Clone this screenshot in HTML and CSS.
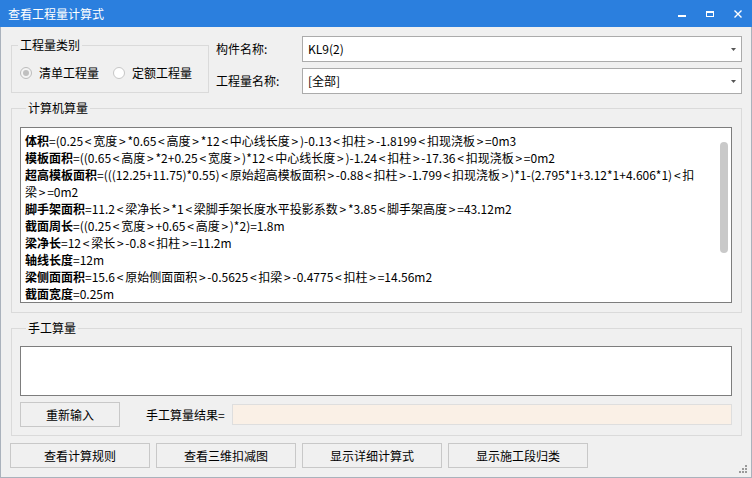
FILE: index.html
```html
<!DOCTYPE html>
<html lang="zh-CN">
<head>
<meta charset="utf-8">
<title>查看工程量计算式</title>
<link rel="stylesheet" href="styles.css">
</head>
<body>
<div class="window">
  <div class="titlebar">
    <span class="title">查看工程量计算式</span>
    <div class="controls">
      <div class="ctrl"><svg width="28" height="27" viewBox="0 0 28 27"><rect x="10" y="15" width="8" height="2" fill="#fff"/></svg></div>
      <div class="ctrl"><svg width="28" height="27" viewBox="0 0 28 27"><rect x="10.5" y="11.5" width="7" height="5" fill="none" stroke="#fff" stroke-width="1"/><rect x="10" y="11" width="8" height="2" fill="#fff"/></svg></div>
      <div class="ctrl"><svg width="28" height="27" viewBox="0 0 28 27"><path d="M10.5 10.5 L17.5 17.5 M17.5 10.5 L10.5 17.5" stroke="#fff" stroke-width="1.4" fill="none"/></svg></div>
    </div>
  </div>
  <div class="body">
    <div class="top-row">
      <fieldset class="group type-group">
        <legend>工程量类别</legend>
        <div class="radios">
          <div class="radio"><span class="circle checked"><span class="dot"></span></span><span>清单工程量</span></div>
          <div class="radio"><span class="circle"></span><span>定额工程量</span></div>
        </div>
      </fieldset>
      <div class="fields">
        <div class="field-row">
          <span class="field-label">构件名称:</span>
          <div class="combo"><span class="combo-text">KL9(2)</span><svg class="arrow" width="5" height="3" viewBox="0 0 5 3"><polygon points="0,0 5,0 2.5,3" fill="#555"/></svg></div>
        </div>
        <div class="field-row">
          <span class="field-label">工程量名称:</span>
          <div class="combo"><span class="combo-text">[全部]</span><svg class="arrow" width="5" height="3" viewBox="0 0 5 3"><polygon points="0,0 5,0 2.5,3" fill="#555"/></svg></div>
        </div>
      </div>
    </div>

    <fieldset class="group calc-group">
      <legend>计算机算量</legend>
      <div class="calc-text">
        <div class="formula">
          <div><b>体积</b>=(0.25<i>&lt;</i>宽度<i>&gt;</i>*0.65<i>&lt;</i>高度<i>&gt;</i>*12<i>&lt;</i>中心线长度<i>&gt;</i>)-0.13<i>&lt;</i>扣柱<i>&gt;</i>-1.8199<i>&lt;</i>扣现浇板<i>&gt;</i>=0m3</div>
          <div><b>模板面积</b>=((0.65<i>&lt;</i>高度<i>&gt;</i>*2+0.25<i>&lt;</i>宽度<i>&gt;</i>)*12<i>&lt;</i>中心线长度<i>&gt;</i>)-1.24<i>&lt;</i>扣柱<i>&gt;</i>-17.36<i>&lt;</i>扣现浇板<i>&gt;</i>=0m2</div>
          <div><b>超高模板面积</b>=(((12.25+11.75)*0.55)<i>&lt;</i>原始超高模板面积<i>&gt;</i>-0.88<i>&lt;</i>扣柱<i>&gt;</i>-1.799<i>&lt;</i>扣现浇板<i>&gt;</i>)*1-(2.795*1+3.12*1+4.606*1)<i>&lt;</i>扣<br>梁<i>&gt;</i>=0m2</div>
          <div><b>脚手架面积</b>=11.2<i>&lt;</i>梁净长<i>&gt;</i>*1<i>&lt;</i>梁脚手架长度水平投影系数<i>&gt;</i>*3.85<i>&lt;</i>脚手架高度<i>&gt;</i>=43.12m2</div>
          <div><b>截面周长</b>=((0.25<i>&lt;</i>宽度<i>&gt;</i>+0.65<i>&lt;</i>高度<i>&gt;</i>)*2)=1.8m</div>
          <div><b>梁净长</b>=12<i>&lt;</i>梁长<i>&gt;</i>-0.8<i>&lt;</i>扣柱<i>&gt;</i>=11.2m</div>
          <div><b>轴线长度</b>=12m</div>
          <div><b>梁侧面面积</b>=15.6<i>&lt;</i>原始侧面面积<i>&gt;</i>-0.5625<i>&lt;</i>扣梁<i>&gt;</i>-0.4775<i>&lt;</i>扣柱<i>&gt;</i>=14.56m2</div>
          <div><b>截面宽度</b>=0.25m</div>
        </div>
        <div class="scroll"><div class="thumb"></div></div>
      </div>
    </fieldset>

    <fieldset class="group manual-group">
      <legend>手工算量</legend>
      <div class="manual-input"></div>
      <div class="manual-row">
        <div class="btn btn-small">重新输入</div>
        <span class="result-label">手工算量结果=</span>
        <div class="result"></div>
      </div>
    </fieldset>

    <div class="bottom-buttons">
      <div class="btn btn-wide">查看计算规则</div>
      <div class="btn btn-wide">查看三维扣减图</div>
      <div class="btn btn-wide">显示详细计算式</div>
      <div class="btn btn-wide">显示施工段归类</div>
    </div>

    <svg class="grip" width="9" height="9" viewBox="0 0 9 9">
      <rect x="6" y="0" width="2" height="2" fill="#9a9a9a"/>
      <rect x="3" y="3" width="2" height="2" fill="#9a9a9a"/>
      <rect x="6" y="3" width="2" height="2" fill="#9a9a9a"/>
      <rect x="0" y="6" width="2" height="2" fill="#9a9a9a"/>
      <rect x="3" y="6" width="2" height="2" fill="#9a9a9a"/>
      <rect x="6" y="6" width="2" height="2" fill="#9a9a9a"/>
    </svg>
  </div>
</div>
</body>
</html>
```

FILE: styles.css
```css
* { box-sizing: border-box; }
html, body { margin: 0; padding: 0; }
body {
  width: 752px;
  height: 478px;
  overflow: hidden;
  background: #f0f0f0;
  color: #000;
  font-family: "Noto Sans CJK SC", "Microsoft YaHei", sans-serif;
  font-size: 12px;
}
.window { width: 752px; height: 478px; display: flex; flex-direction: column; }

.titlebar {
  height: 27px;
  flex: none;
  background: #2b7fde;
  color: #fff;
  display: flex;
  align-items: center;
  padding-left: 8px;
}
.title { flex: 1; font-size: 12px; line-height: 14px; }
.controls { display: flex; height: 27px; }
.ctrl { width: 28px; height: 27px; }
.ctrl svg { display: block; }

.body {
  position: relative;
  flex: 1;
  border: 1px solid #aab2bc;
  border-top: none;
  padding: 9px 9px 0 10px;
  display: flex;
  flex-direction: column;
}

.group {
  margin: 0;
  padding: 0;
  min-width: 0;
  border: 1px solid #dadada;
}
.group legend {
  margin-left: 6px;
  padding: 0 2px;
  font-size: 12px;
  line-height: 14px;
}

.top-row { display: flex; justify-content: space-between; height: 58px; }
.type-group { width: 198px; height: 55px; margin-top: 2px; }
.radios { display: flex; align-items: center; padding: 13px 0 0 8px; height: 29px; }
.radio { display: flex; align-items: center; gap: 7px; margin-right: 14px; line-height: 16px; }
.circle {
  width: 12px; height: 12px;
  border: 1px solid #c6c6c6;
  border-radius: 50%;
  background: #fff;
  display: flex; align-items: center; justify-content: center;
}
.circle.checked { border-color: #bcbcbc; background: #f4f4f4; }
.dot { width: 6px; height: 6px; border-radius: 50%; background: #c0c0c0; }

.fields { width: 526px; display: flex; flex-direction: column; gap: 6px; }
.field-row { display: flex; align-items: center; height: 26px; }
.field-label { width: 86px; line-height: 16px; }
.combo {
  width: 440px; height: 26px;
  border: 1px solid #ababab;
  background: #fff;
  display: flex; align-items: center;
  padding: 0 5px 0 5px;
}
.combo-text { flex: 1; line-height: 16px; }
.arrow { display: block; }

.calc-group { margin-top: 7px; padding: 12px 9px 9px 8px; }
.calc-text {
  height: 176px;
  border: 1px solid #7d7d7d;
  background: #fff;
  display: flex;
}
.formula {
  flex: 1;
  padding: 4px 0 0 4px;
  line-height: 17px;
  white-space: nowrap;
  overflow: hidden;
}
.formula b { font-weight: bold; }
.formula i { font-style: normal; padding: 0 1.75px; }
.scroll { width: 15px; flex: none; padding-top: 14px; }
.thumb { width: 8px; height: 111px; margin-left: 4px; background: #c9c9c9; border-radius: 4px; }

.manual-group { margin-top: 8px; padding: 11px 9px 8px 8px; }
.manual-input { height: 50px; border: 1px solid #7d7d7d; background: #fff; }
.manual-row { display: flex; align-items: center; margin-top: 6px; height: 25px; }

.btn {
  height: 25px;
  border: 1px solid #c8c8c8;
  background: #f0f0f0;
  display: flex; align-items: center; justify-content: center;
  line-height: 16px;
}
.btn-small { width: 100px; }
.result-label { margin-left: 26px; width: 86px; line-height: 16px; }
.result { flex: 1; height: 21px; background: #faf0e6; border: 1px solid #dedede; }

.bottom-buttons { display: flex; gap: 6px; margin-top: 7px; margin-left: -1px; }
.btn-wide { width: 140px; }

.grip { position: absolute; right: 3px; bottom: 3px; display: block; }
```
